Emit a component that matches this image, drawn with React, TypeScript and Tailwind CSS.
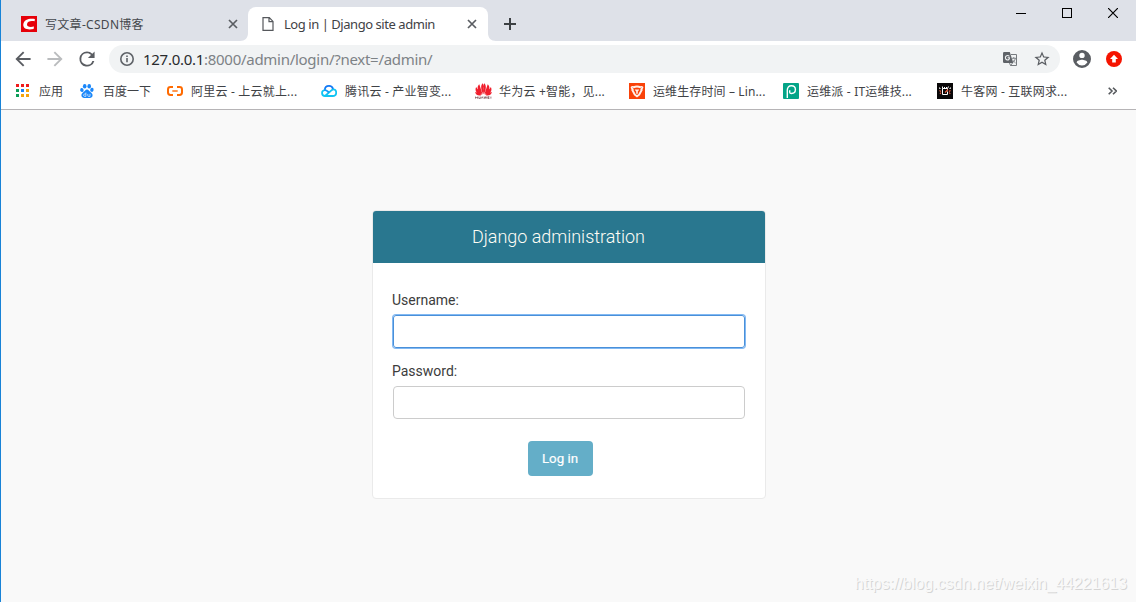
import type { ReactNode } from "react";

const uiFont = "font-['Noto_Sans','Noto_Sans_CJK_SC',sans-serif]";

function CloseIcon() {
  return (
    <svg width="10" height="10" viewBox="0 0 10 10" fill="none" stroke="#5a5d62" strokeWidth="1.7">
      <path d="M1 1l8 8M9 1l-8 8" />
    </svg>
  );
}

function CsdnIcon() {
  return (
    <svg width="16" height="16" viewBox="0 0 16 16">
      <rect width="16" height="16" fill="#e60009" />
      <path d="M13.6 5.300 13.900 2.900C8.500 2.200 3 2.900 2.300 8.300c-.5 4.900 4.500 5.700 10.300 4.700l.4-2.400c-3.400.6-7.300.6-7-2.300.3-3.200 3.900-3.700 7.600-3z" fill="#fff" />
    </svg>
  );
}

function AppsIcon() {
  const colors = ["#f01c1c", "#f01c1c", "#f01c1c", "#0b9d58", "#1a83f5", "#f5a30b", "#0b9d58", "#f5a30b", "#f5a30b"];
  return (
    <svg width="14" height="14" viewBox="0 0 14 14">
      {colors.map((c, i) => (
        <rect key={i} x={(i % 3) * 5} y={Math.floor(i / 3) * 5} width="3" height="3" fill={c} />
      ))}
    </svg>
  );
}

function BaiduIcon() {
  return (
    <svg width="16" height="16" viewBox="0 0 16 16" fill="#1a87fa">
      <ellipse cx="5.700" cy="3.200" rx="1.800" ry="2.300" />
      <ellipse cx="10.200" cy="3.200" rx="1.800" ry="2.300" />
      <ellipse cx="2.900" cy="7" rx="1.700" ry="2.100" transform="rotate(-12 2.900 7)" />
      <ellipse cx="12.900" cy="6.800" rx="1.700" ry="2.100" transform="rotate(12 12.900 6.800)" />
      <path d="M8 6.400c1.600 0 2.200 1.500 3.400 2.600 1.300 1.100 2.600 2.100 2.100 4.100-.5 2-2.600 2.100-5.500 1.900-2.900.2-5 .1-5.500-1.900-.5-2 .8-3 2.100-4.100C5.800 7.900 6.400 6.400 8 6.400z" />
      <path d="M6.900 9.500v3.900H5.700c-1.500 0-1.500-2.400 0-2.400h1.200M8.800 10.900v1.700c0 .6.3.8.9.8h1.300v-2.500" fill="none" stroke="#fff" strokeWidth=".65" />
    </svg>
  );
}

function AliIcon() {
  return (
    <svg width="16" height="16" viewBox="0 0 16 16" fill="none" stroke="#ff6a00">
      <path d="M6 4H3.500Q1 4 1 6.400v3.200Q1 12 3.500 12H6M10 4h2.500Q15 4 15 6.400v3.200q0 2.400-2.500 2.400H10" strokeWidth="2" />
      <path d="M5.300 8h5.400" strokeWidth="1.400" />
    </svg>
  );
}

function TencentIcon() {
  return (
    <svg width="16" height="16" viewBox="0 0 16 16" fill="none" strokeWidth="1.800" strokeLinecap="round" strokeLinejoin="round">
      <path d="M3.800 7.100C3.900 4.300 5.900 2.900 8 2.900c2.100 0 3.500 1.200 4 3.100" stroke="#1379f5" />
      <path d="M3.800 7.100C-.1 7.300.3 13 4 13L11 6.900c2.100-1.500 4.200.2 4.200 2.600 0 2-1.300 3.500-3.400 3.500H4" stroke="#10c4f3" />
      <path d="M3.800 7.100c1.700 0 2.400.8 3.600 1.900" stroke="#1598f7" />
    </svg>
  );
}

function HuaweiIcon() {
  return (
    <svg width="17" height="16" viewBox="0 0 17 16" fill="#f01f2d">
      <path d="M8.200 11.200C6.100 7 5.100 2.500 7.800.2c1.100 2 .9 7 .4 11zM8.800 11.200c2.100-4.200 3.100-8.700.4-11-1.100 2-.9 7-.4 11zM7.600 11.500C6.400 7.500 5 3.500 4.300 1.200 1.200 4 2.500 8.700 7.600 11.500zM9.400 11.500c1.200-4 2.600-8 3.300-10.300 3.100 2.800 1.800 7.500-3.300 10.300zM6.900 11.900C4.700 8.500 2.700 6 1.100 3.900-.5 7.200 1.300 11.500 6.900 11.900zM10.100 11.900c2.200-3.400 4.200-5.900 5.800-8 1.600 3.300-.2 7.600-5.800 8zM6.200 12.400C3.800 10.800 2 9.700.2 8.700c0 2.700 2.400 4.400 6 3.700zM10.800 12.400c2.400-1.600 4.200-2.700 6-3.700 0 2.700-2.400 4.400-6 3.700z" />
      <path d="M.5 13.600v2M2.500 13.600v2M.5 14.600h2M3.800 13.600v1.900h1.500v-1.900M6.200 15.600l1-1.900 1 1.900M9 13.600l.6 1.900.7-1.900.7 1.900.6-1.900M14.400 13.700h-1.600v1.800h1.600M12.900 14.600h1.300M15.900 13.600v2" fill="none" stroke="#75494f" strokeWidth=".7" />
    </svg>
  );
}

function OpsIcon() {
  return (
    <svg width="16" height="16" viewBox="0 0 16 16" fill="none">
      <rect width="16" height="16" fill="#f94209" />
      <path d="M4.400 4.400Q8 2.400 11.600 4.400L12.700 7 10.200 11.700 8 13.300 5.800 11.700 3.300 7z" stroke="#fff0ea" strokeWidth="2" />
      <path d="M1.600 4.100Q2.500 2.500 4.800 3L3.400 6.700Q1.500 6 1.600 4.100zM14.400 4.100Q13.500 2.500 11.200 3l1.400 3.700q1.900-.7 1.800-2.600zM5.600 6.400h4.800L8.800 8.600v2.200H7.200V8.600z" fill="#fff0ea" />
      <path d="M3.600 4.700 6 6.500M12.400 4.700 10 6.500" stroke="#f94209" strokeWidth=".8" />
    </svg>
  );
}

function PaiIcon() {
  return (
    <svg width="16" height="16" viewBox="0 0 16 16">
      <rect width="16" height="16" rx="1" fill="#03a487" />
      <path d="M4.300 15V7.300c0-2.900 1.500-4.500 4.100-4.500 2.500 0 4 1.500 4 3.800s-1.600 3.900-3.900 3.900c-1.200 0-1.800-.4-1.800-1.300V7.300" fill="none" stroke="#fff" strokeWidth="1.400" />
    </svg>
  );
}

function NiukeIcon() {
  return (
    <svg width="16" height="16" viewBox="0 0 16 16" fill="none">
      <rect width="16" height="16" fill="#0a0809" />
      <path d="M10.500 8.500v3h-5v-6h5v1.500M5.500 5.500v-2M7.500 5V4M9.500 5V4M11.500 3.500l-1 2M2.500 4.500v1h1M13.500 4.500v1h-1" stroke="#fff" strokeWidth="1" />
      <path d="M2.500 7.500 4 8.500M4 9.500 3 11M8 9.500l3-3M12 8.500l1.500-1M12 9.500l1.300 1.500" stroke="#ef6040" strokeWidth="1.100" />
    </svg>
  );
}

function TranslateIcon() {
  return (
    <svg width="15" height="15" viewBox="0 0 15 15">
      <path d="M1.200 0h5.600l3.500 11H1.200Q0 11 0 9.800V1.200Q0 0 1.200 0z" fill="#5f6368" />
      <path d="M6.400 4.300C5.500 3.400 4.200 3.300 3.200 4c-1.400 1-.9 3.600.8 3.900 1.600.3 2.500-.7 2.500-2.100H4.600" stroke="#f1f3f4" strokeWidth="1.100" fill="none" />
      <path d="M8 2.500h5.500v11H7.500l2-2.500M7.500 13.500 6.500 11" fill="none" stroke="#777b7f" strokeWidth="1" />
      <path d="M9 6.300h4M10.800 5v1.300M9.700 8.200l2.900 2.800M12.400 6.500q-.6 2.600-2.600 3.900" fill="none" stroke="#777b7f" strokeWidth=".9" />
    </svg>
  );
}

const bookmarks: { icon: ReactNode; label: string; item: string; text: string }[] = [
  { icon: <BaiduIcon />, label: "百度一下", item: "w-[88px]", text: "" },
  { icon: <AliIcon />, label: "阿里云 - 上云就上...", item: "w-[154px]", text: "tracking-[0.2px]" },
  { icon: <TencentIcon />, label: "腾讯云 - 产业智变...", item: "w-[154px]", text: "tracking-[0.2px]" },
  { icon: <HuaweiIcon />, label: "华为云 +智能，见...", item: "w-[154px]", text: "tracking-[0.2px]" },
  { icon: <OpsIcon />, label: "运维生存时间 – Lin...", item: "w-[154px]", text: "tracking-[0.12px]" },
  { icon: <PaiIcon />, label: "运维派 - IT运维技...", item: "w-[154px]", text: "tracking-[0.18px]" },
  { icon: <NiukeIcon />, label: "牛客网 - 互联网求...", item: "w-[154px]", text: "tracking-[0.2px]" },
];

function TabStrip() {
  return (
    <div className="flex h-[41px] shrink-0 items-start bg-[#dee1e8]">
      <div className="mt-[7px] flex h-[34px] w-[247px] items-center pr-[10px] pl-5">
        <CsdnIcon />
        <span className="ml-2 flex-1 pt-[2px] text-[12px] leading-4 tracking-[0.3px] whitespace-nowrap text-[#45484d]">写文章-CSDN博客</span>
        <CloseIcon />
      </div>
      <div className="relative mt-[7px] flex h-[34px] w-[240px] items-center rounded-t-lg bg-white pr-[11px] pl-[14px]">
        <svg className="absolute bottom-0 -left-2" width="8" height="8" viewBox="0 0 8 8">
          <path d="M8 0v8H0c5 0 8-3 8-8z" fill="#fff" />
        </svg>
        <svg className="absolute -right-2 bottom-0" width="8" height="8" viewBox="0 0 8 8">
          <path d="M0 0v8h8C3 8 0 5 0 0z" fill="#fff" />
        </svg>
        <svg width="12" height="14" viewBox="0 0 12 14" fill="none" stroke="#55585c" strokeWidth="1.200">
          <path d="M1 .7h6.300L11 4.400v8.900H1zM7 .7v4h4" />
        </svg>
        <span className="ml-[10px] flex-1 text-[13px] leading-4 tracking-[-0.45px] whitespace-nowrap text-[#3f4246]">Log in | Django site admin</span>
        <CloseIcon />
      </div>
      <svg className="mt-[18px] ml-4" width="12" height="12" viewBox="0 0 12 12" stroke="#3c4043" strokeWidth="2">
        <path d="M6 0v12M0 6h12" />
      </svg>
      <div className="mt-2 mr-[18px] ml-auto flex items-center gap-9">
        <svg width="10" height="10" viewBox="0 0 10 10"><path d="M0 5.500h10" stroke="#000" /></svg>
        <svg width="10" height="10" viewBox="0 0 10 10"><rect x=".5" y=".5" width="9" height="9" fill="none" stroke="#000" /></svg>
        <svg width="10" height="10" viewBox="0 0 10 10"><path d="M0 0l10 10M10 0 0 10" stroke="#000" strokeWidth="1.200" /></svg>
      </div>
    </div>
  );
}

function Toolbar() {
  return (
    <div className="flex h-9 shrink-0 items-center bg-white pr-[14px] pl-[13px]">
      <svg width="18" height="18" viewBox="2.500 3 19 18" fill="#5a5d62"><path d="M20 11H7.830l5.590-5.590L12 4l-8 8 8 8 1.410-1.410L7.830 13H20v-2z" /></svg>
      <svg className="ml-[14px]" width="18" height="18" viewBox="2.500 3 19 18" fill="#babcbe"><path d="M12 4l-1.410 1.410L16.170 11H4v2h12.170l-5.580 5.590L12 20l8-8z" /></svg>
      <svg className="ml-[14px]" width="18" height="18" viewBox="2.500 2.500 19 19" fill="#5a5d62"><path d="M17.650 6.350A7.960 7.960 0 0 0 12 4a8 8 0 1 0 7.730 10h-2.080A6 6 0 1 1 12 6c1.660 0 3.140.69 4.220 1.780L13 11h7V4l-2.350 2.350z" /></svg>
      <div className="ml-[13px] flex h-7 w-[951px] items-center rounded-full bg-[#f1f3f4] pr-[10px] pl-[10px]">
        <svg width="16" height="16" viewBox="0 0 16 16" fill="none" stroke="#5f6368" strokeWidth="1.600"><circle cx="8" cy="8" r="6.200" /><path d="M8 7v4.200M8 4.500v1.600" /></svg>
        <span className="ml-2 flex-1 text-[15px] leading-5 tracking-[-0.28px] whitespace-nowrap text-[#7d8286]">
          <span className="text-[#292b2e]">127.0.0.1</span>:8000/admin/login/?next=/admin/
        </span>
        <TranslateIcon />
        <svg className="ml-4" width="16" height="16" viewBox="1.500 1.500 21 21" fill="#5a5d62"><path d="M22 9.240l-7.190-.62L12 2 9.190 8.630 2 9.240l5.460 4.730L5.820 21 12 17.270 18.180 21l-1.630-7.030L22 9.240zM12 15.400l-3.760 2.270 1-4.280-3.320-2.880 4.380-.38L12 6.100l1.710 4.040 4.380.38-3.320 2.880 1 4.280L12 15.400z" /></svg>
      </div>
      <svg className="ml-[13px]" width="18" height="18" viewBox="2 2 20 20" fill="#5a5d62"><path d="M12 2a10 10 0 1 0 0 20 10 10 0 0 0 0-20zm0 3a3 3 0 1 1 0 6 3 3 0 0 1 0-6zm0 14.200a7.200 7.200 0 0 1-6-3.220c.03-1.990 4-3.080 6-3.080 1.990 0 5.970 1.090 6 3.080a7.200 7.200 0 0 1-6 3.220z" /></svg>
      <svg className="ml-[15px]" width="16" height="16" viewBox="0 0 16 16"><circle cx="8" cy="8" r="8" fill="#f51400" /><path d="M8 3.700l4 4.300H9.800v3.500H6.200V8H4z" fill="#fff" /></svg>
    </div>
  );
}

function BookmarkBar() {
  return (
    <div className="flex h-[33px] shrink-0 items-center border-b border-[#b6b4b6] bg-white pr-[19px] pb-[4px] pl-[15px] text-[12px] leading-4 text-[#3f4246]">
      <div className="flex w-[63px] items-center gap-[9px]">
        <AppsIcon />
        <span className="pt-[2px] whitespace-nowrap">应用</span>
      </div>
      {bookmarks.map((b) => (
        <div key={b.label} className={`flex shrink-0 items-center ${b.item}`}>
          <span className="flex w-6 shrink-0">{b.icon}</span>
          <span className={`pt-[2px] whitespace-nowrap ${b.text}`}>{b.label}</span>
        </div>
      ))}
      <svg className="ml-auto" width="9" height="8" viewBox="0 0 9 8" fill="none" stroke="#55585c" strokeWidth="1.600"><path d="M.7.700 4 4 .7 7.300M5 .7 8.300 4 5 7.300" /></svg>
    </div>
  );
}

function LoginCard() {
  return (
    <div className="mt-[100px] ml-[371px] h-[289px] w-[394px] overflow-hidden rounded border border-[#eaeaea] bg-white">
      <div className="flex h-[52px] items-center bg-[#29778f] pl-[99px]">
        <h1 className="text-[18px] leading-5 font-light tracking-[-0.03px] whitespace-nowrap text-[#fffdf5]">Django administration</h1>
      </div>
      <form className="flex flex-col px-5 pt-[29px]" onSubmit={(e) => e.preventDefault()}>
        <label htmlFor="username" className="-ml-px h-[23px] text-[14px] leading-4 text-[#3c3c3c]">Username:</label>
        <input id="username" type="text" className="h-[33px] rounded-[3px] border border-[#4a90d9] px-2 shadow-[0_0_0_1px_#82b9f3] outline-none" />
        <label htmlFor="password" className="mt-[15px] -ml-px h-[23px] text-[14px] leading-4 text-[#3c3c3c]">Password:</label>
        <input id="password" type="password" className="h-[33px] rounded border border-[#ccc] px-2 outline-none" />
        <button type="submit" className="mt-[22px] ml-[135px] h-[35px] w-[65px] rounded bg-[#64aec8] pr-px text-[13.300px] font-normal text-white [-webkit-text-stroke:0.2px_white]">Log in</button>
      </form>
    </div>
  );
}

export default function App() {
  return (
    <div className={`flex h-[602px] w-[1136px] flex-col overflow-hidden border-l border-[#1883d7] ${uiFont}`}>
      <TabStrip />
      <Toolbar />
      <BookmarkBar />
      <main className="flex flex-1 flex-col bg-[#f9f9f9] font-['Roboto',sans-serif]">
        <LoginCard />
        <div className="mt-auto mr-[9px] mb-[9px] self-end font-['Liberation_Sans',sans-serif] text-[16px] leading-[18px] text-[#f9f9f9] [text-shadow:1px_1px_0_#d5d5d5]">https://blog.csdn.net/weixin_44221613</div>
      </main>
    </div>
  );
}
